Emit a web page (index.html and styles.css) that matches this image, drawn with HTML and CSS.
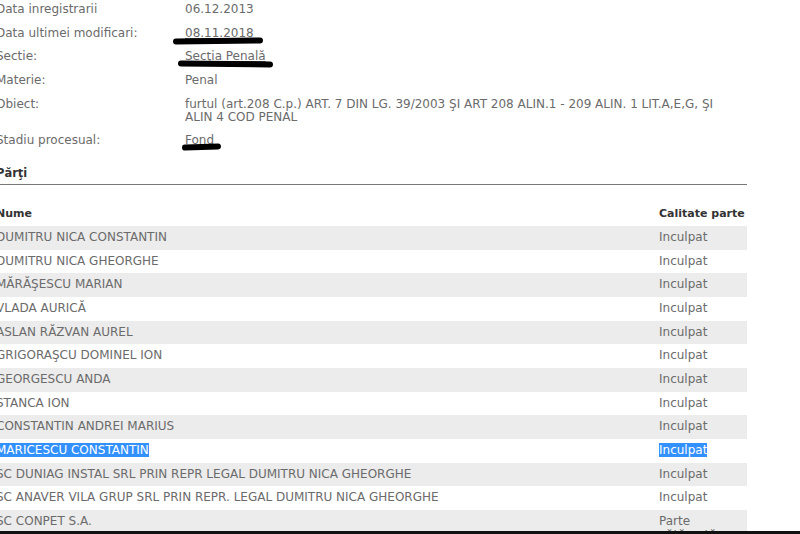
FILE: index.html
```html
<!DOCTYPE html>
<html lang="ro">
<head>
    <meta charset="UTF-8">
    <title>Dosar</title>
    <link rel="stylesheet" href="styles.css">
</head>
<body>

<div class="page">
    <table class="details">
        <tr>
            <td class="label">Data inregistrarii</td>
            <td class="value">06.12.2013</td>
        </tr>
        <tr>
            <td class="label">Data ultimei modificari:</td>
            <td class="value"><a href="#">08.11.2018</a><span class="mark mark-date"></span></td>
        </tr>
        <tr>
            <td class="label">Sectie:</td>
            <td class="value"><a href="#">Secţia Penală</a><span class="mark mark-section"></span></td>
        </tr>
        <tr>
            <td class="label">Materie:</td>
            <td class="value">Penal</td>
        </tr>
        <tr>
            <td class="label">Obiect:</td>
            <td class="value obiect">furtul (art.208 C.p.) ART. 7 DIN LG. 39/2003 ŞI ART 208 ALIN.1 - 209 ALIN. 1 LIT.A,E,G, ŞI ALIN 4 COD PENAL</td>
        </tr>
        <tr>
            <td class="label">Stadiu procesual:</td>
            <td class="value">Fond<span class="mark mark-stage"></span></td>
        </tr>
    </table>

    <h3 class="section-title">Părţi</h3>

    <div class="parties">
        <div class="row head">
            <div class="name">Nume</div>
            <div class="role">Calitate parte</div>
        </div>
        <div class="row"><div class="name">DUMITRU NICA CONSTANTIN</div><div class="role">Inculpat</div></div>
        <div class="row"><div class="name">DUMITRU NICA GHEORGHE</div><div class="role">Inculpat</div></div>
        <div class="row"><div class="name">MĂRĂŞESCU MARIAN</div><div class="role">Inculpat</div></div>
        <div class="row"><div class="name">VLADA AURICĂ</div><div class="role">Inculpat</div></div>
        <div class="row"><div class="name">ASLAN RĂZVAN AUREL</div><div class="role">Inculpat</div></div>
        <div class="row"><div class="name">GRIGORAŞCU DOMINEL ION</div><div class="role">Inculpat</div></div>
        <div class="row"><div class="name">GEORGESCU ANDA</div><div class="role">Inculpat</div></div>
        <div class="row"><div class="name">STANCA ION</div><div class="role">Inculpat</div></div>
        <div class="row"><div class="name">CONSTANTIN ANDREI MARIUS</div><div class="role">Inculpat</div></div>
        <div class="row"><div class="name"><span class="selected">MARICESCU CONSTANTIN</span></div><div class="role"><span class="selected">Inculpat</span></div></div>
        <div class="row"><div class="name">SC DUNIAG INSTAL SRL PRIN REPR LEGAL DUMITRU NICA GHEORGHE</div><div class="role">Inculpat</div></div>
        <div class="row"><div class="name">SC ANAVER VILA GRUP SRL PRIN REPR. LEGAL DUMITRU NICA GHEORGHE</div><div class="role">Inculpat</div></div>
        <div class="row"><div class="name">SC CONPET S.A.</div><div class="role">Parte vătămată</div></div>
    </div>
</div>

<div class="bottom-edge"></div>

</body>
</html>
```

FILE: styles.css
```css
body {
    margin: 0;
    font-family: "DejaVu Sans", Verdana, sans-serif;
    font-size: 12px;
    color: #6b6b6b;
    background: #fff;
    overflow: hidden;
}

.page {
    width: 751px;
    margin: -2px 0 0 -4px;
}

table.details {
    border-collapse: collapse;
    width: 100%;
}

.details td {
    padding: 5px 0;
    line-height: 13.67px;
    vertical-align: top;
}

.details .label {
    width: 189px;
}

.details .value {
    position: relative;
    padding-right: 20px;
}

.details .obiect {
    line-height: 13px;
}

.details a {
    color: #6b6b6b;
    text-decoration: underline;
}

/* black marker strokes drawn over the screenshot */
.mark {
    position: absolute;
    height: 6px;
    background: #000;
    border-radius: 3px;
}

.mark-date {
    left: -12px;
    top: 16px;
    width: 90px;
    transform: rotate(-0.6deg);
}

.mark-section {
    left: -7px;
    top: 16px;
    width: 95px;
    transform: rotate(0.6deg);
}

.mark-stage {
    left: -3px;
    top: 15px;
    width: 39px;
    transform: rotate(-2deg);
}

.section-title {
    margin: 14px 0 0;
    padding-bottom: 4px;
    font-size: 11.5px;
    line-height: 14px;
    color: #333;
    border-bottom: 1px solid #777;
}

.parties {
    margin-top: 17px;
}

.row {
    display: flex;
}

.row:nth-child(even) {
    background: #ececec;
}

.row .name,
.row .role {
    padding: 5px 0;
    line-height: 13.67px;
}

.row .name {
    flex: 1;
}

.row .role {
    width: 88px;
    padding-left: 3px;
}

.row.head {
    font-size: 11px;
    font-weight: bold;
    color: #333;
}

.row.head .role {
    padding-left: 1px;
    white-space: nowrap;
}

.selected {
    background: #3390ff;
    color: #fff;
}

.bottom-edge {
    position: fixed;
    left: 0;
    right: 0;
    bottom: 0;
    height: 3px;
    background: #111;
}
```
